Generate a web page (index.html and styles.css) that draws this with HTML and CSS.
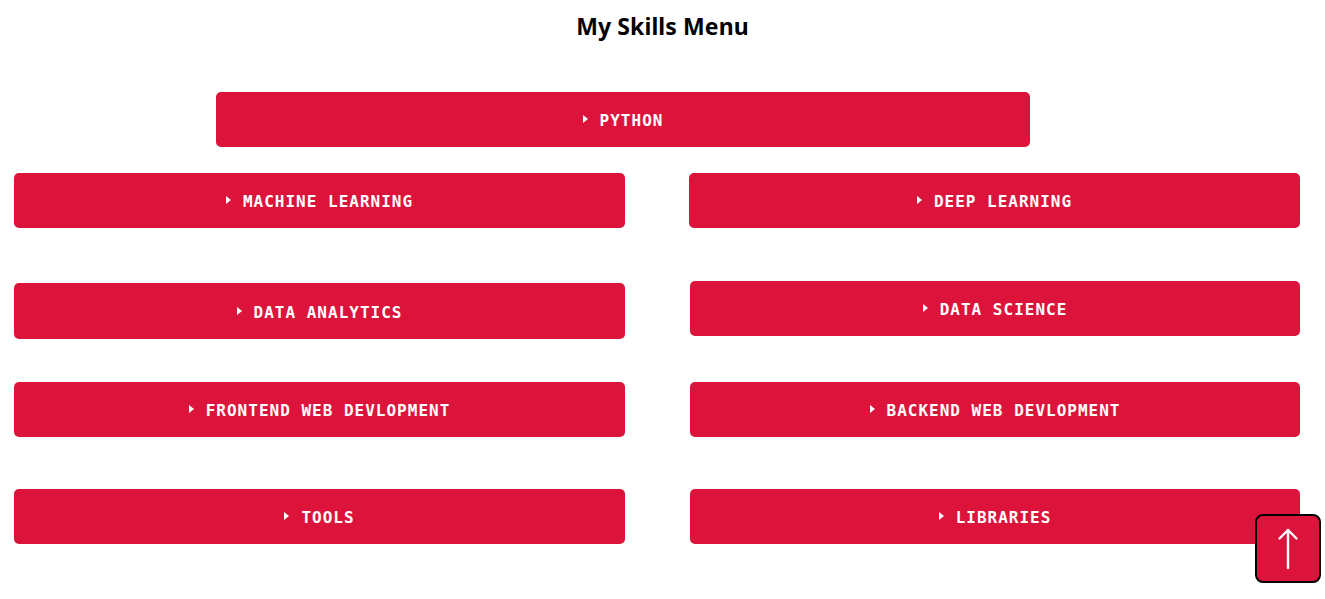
FILE: index.html
```html
<!DOCTYPE html>
<html>
<head>
<meta charset="utf-8">
<link rel="stylesheet" href="styles.css">
</head>
<body>
<h2 class="title">My Skills Menu</h2>
<div class="menu">
  <div class="top-row">
    <div class="skill skill-wide"><span class="caret"></span>PYTHON</div>
  </div>
  <div class="row row-1">
    <div class="skill"><span class="caret"></span>MACHINE LEARNING</div>
    <div class="skill shift-left"><span class="caret"></span>DEEP LEARNING</div>
  </div>
  <div class="row row-2">
    <div class="skill tall"><span class="caret"></span>DATA ANALYTICS</div>
    <div class="skill raised"><span class="caret"></span>DATA SCIENCE</div>
  </div>
  <div class="row row-3">
    <div class="skill"><span class="caret"></span>FRONTEND WEB DEVLOPMENT</div>
    <div class="skill"><span class="caret"></span>BACKEND WEB DEVLOPMENT</div>
  </div>
  <div class="row row-4">
    <div class="skill"><span class="caret"></span>TOOLS</div>
    <div class="skill"><span class="caret"></span>LIBRARIES</div>
  </div>
</div>
<button class="to-top" aria-label="Back to top">
  <svg width="24" height="44" viewBox="0 0 24 44" fill="none" stroke="#fff" stroke-width="2.4" stroke-linecap="round" stroke-linejoin="round">
    <path d="M12 3 V41"/>
    <path d="M3.5 11.5 L12 3 L20.5 11.5"/>
  </svg>
</button>
</body>
</html>
```

FILE: styles.css
```css
* { box-sizing: border-box; }
html, body { margin: 0; padding: 0; background: #fff; }
body { font-family: "DejaVu Sans Mono", monospace; width: 1325px; height: 599px; overflow: hidden; }

.title {
  margin: 0;
  padding-top: 10px;
  height: 58px;
  text-align: center;
  font-family: "Noto Sans", "Open Sans", sans-serif;
  font-weight: 700;
  font-size: 23px;
  line-height: 32px;
  color: #000;
  letter-spacing: 0.1px;
}

.menu { padding-left: 14px; padding-top: 34px; }

.top-row { display: flex; padding-left: 202px; }

.row {
  display: grid;
  grid-template-columns: 611px 610px;
  column-gap: 65px;
  align-items: start;
}
.row-1 { margin-top: 26px; }
.row-2 { margin-top: 55px; }
.row-3 { margin-top: 43px; }
.row-4 { margin-top: 52px; }

.skill {
  height: 55px;
  background: #dc143c;
  border-radius: 5px;
  color: #fff;
  font-family: "DejaVu Sans Mono", monospace;
  font-weight: 700;
  font-size: 16px;
  letter-spacing: 1px;
  display: flex;
  align-items: center;
  justify-content: center;
  padding-top: 2px;
}
.skill-wide { width: 814px; }
.shift-left { margin-left: -1px; width: 611px; }
.tall { height: 56px; }
.raised { margin-top: -2px; }

.caret {
  display: inline-block;
  width: 0;
  height: 0;
  border-top: 4px solid transparent;
  border-bottom: 4px solid transparent;
  border-left: 5px solid #fff;
  margin-right: 12px;
  margin-top: -3px;
}

.to-top {
  position: fixed;
  left: 1255px;
  top: 514px;
  width: 66px;
  height: 69px;
  background: #dc143c;
  border: 2px solid #000;
  border-radius: 8px;
  padding: 0;
  display: flex;
  align-items: center;
  justify-content: center;
}
```
